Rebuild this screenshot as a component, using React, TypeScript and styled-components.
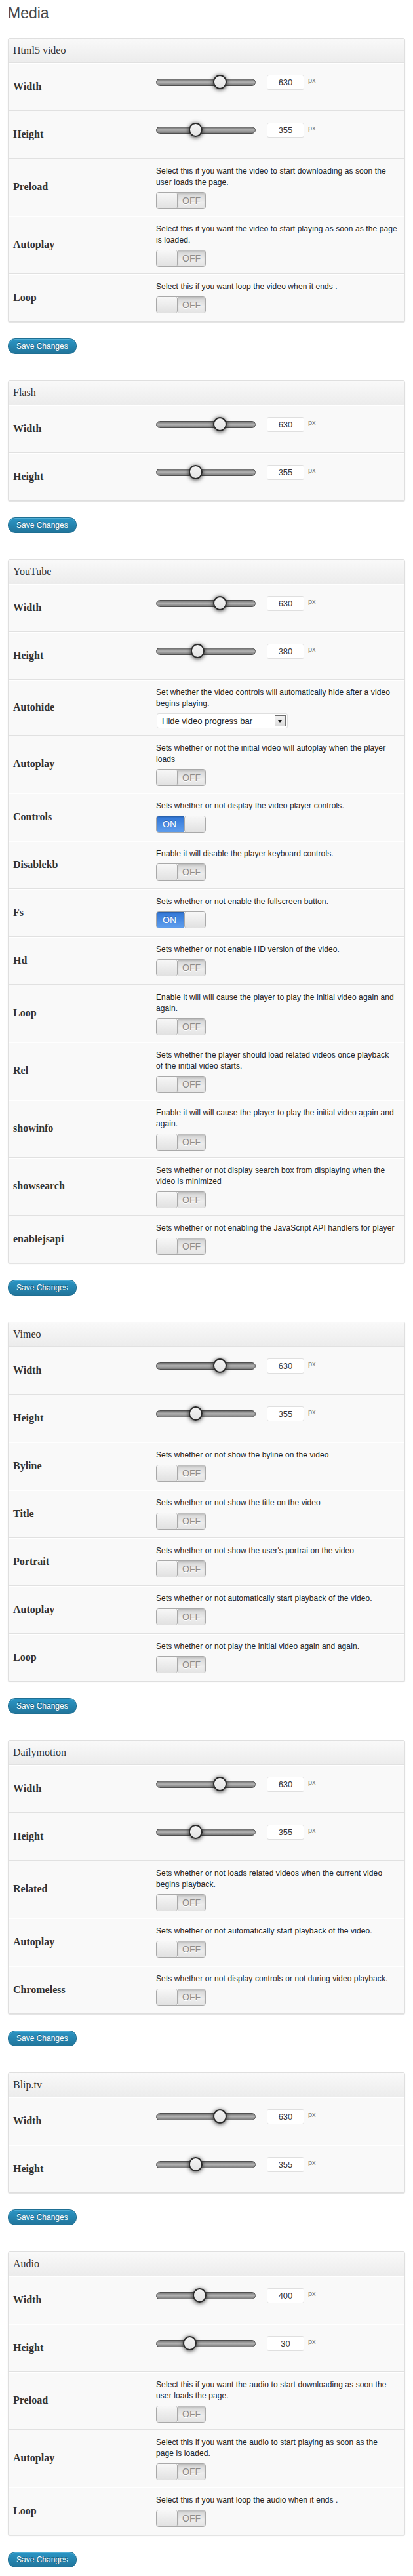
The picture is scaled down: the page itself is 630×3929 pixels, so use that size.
import styled, { createGlobalStyle } from 'styled-components';

const GlobalStyle = createGlobalStyle`
  body {
    margin: 0;
    background: #fff;
    color: #333;
    font-family: "Liberation Sans", Arial, sans-serif;
  }
`;

type Field =
  | { kind: 'range'; label: string; value: number; pos: number }
  | { kind: 'toggle'; label: string; text: string; on?: boolean }
  | { kind: 'select'; label: string; text: string; option: string };

type Section = { title: string; fields: Field[] };

const sections: Section[] = [
  {
    title: 'Html5 video',
    fields: [
      { kind: 'range', label: 'Width', value: 630, pos: 97 },
      { kind: 'range', label: 'Height', value: 355, pos: 60 },
      {
        kind: 'toggle',
        label: 'Preload',
        text: 'Select this if you want the video to start downloading as soon the\nuser loads the page.',
      },
      {
        kind: 'toggle',
        label: 'Autoplay',
        text: 'Select this if you want the video to start playing as soon as the page\nis loaded.',
      },
      { kind: 'toggle', label: 'Loop', text: 'Select this if you want loop the video when it ends .' },
    ],
  },
  {
    title: 'Flash',
    fields: [
      { kind: 'range', label: 'Width', value: 630, pos: 97 },
      { kind: 'range', label: 'Height', value: 355, pos: 60 },
    ],
  },
  {
    title: 'YouTube',
    fields: [
      { kind: 'range', label: 'Width', value: 630, pos: 97 },
      { kind: 'range', label: 'Height', value: 380, pos: 63 },
      {
        kind: 'select',
        label: 'Autohide',
        text: 'Set whether the video controls will automatically hide after a video\nbegins playing.',
        option: 'Hide video progress bar',
      },
      {
        kind: 'toggle',
        label: 'Autoplay',
        text: 'Sets whether or not the initial video will autoplay when the player\nloads',
      },
      { kind: 'toggle', label: 'Controls', text: 'Sets whether or not display the video player controls.', on: true },
      { kind: 'toggle', label: 'Disablekb', text: 'Enable it will disable the player keyboard controls.' },
      { kind: 'toggle', label: 'Fs', text: 'Sets whether or not enable the fullscreen button.', on: true },
      { kind: 'toggle', label: 'Hd', text: 'Sets whether or not enable HD version of the video.' },
      {
        kind: 'toggle',
        label: 'Loop',
        text: 'Enable it will will cause the player to play the initial video again and\nagain.',
      },
      {
        kind: 'toggle',
        label: 'Rel',
        text: 'Sets whether the player should load related videos once playback\nof the initial video starts.',
      },
      {
        kind: 'toggle',
        label: 'showinfo',
        text: 'Enable it will will cause the player to play the initial video again and\nagain.',
      },
      {
        kind: 'toggle',
        label: 'showsearch',
        text: 'Sets whether or not display search box from displaying when the\nvideo is minimized',
      },
      {
        kind: 'toggle',
        label: 'enablejsapi',
        text: 'Sets whether or not enabling the JavaScript API handlers for player',
      },
    ],
  },
  {
    title: 'Vimeo',
    fields: [
      { kind: 'range', label: 'Width', value: 630, pos: 97 },
      { kind: 'range', label: 'Height', value: 355, pos: 60 },
      { kind: 'toggle', label: 'Byline', text: 'Sets whether or not show the byline on the video' },
      { kind: 'toggle', label: 'Title', text: 'Sets whether or not show the title on the video' },
      { kind: 'toggle', label: 'Portrait', text: "Sets whether or not show the user's portrai on the video" },
      { kind: 'toggle', label: 'Autoplay', text: 'Sets whether or not automatically start playback of the video.' },
      { kind: 'toggle', label: 'Loop', text: 'Sets whether or not play the initial video again and again.' },
    ],
  },
  {
    title: 'Dailymotion',
    fields: [
      { kind: 'range', label: 'Width', value: 630, pos: 97 },
      { kind: 'range', label: 'Height', value: 355, pos: 60 },
      {
        kind: 'toggle',
        label: 'Related',
        text: 'Sets whether or not loads related videos when the current video\nbegins playback.',
      },
      { kind: 'toggle', label: 'Autoplay', text: 'Sets whether or not automatically start playback of the video.' },
      {
        kind: 'toggle',
        label: 'Chromeless',
        text: 'Sets whether or not display controls or not during video playback.',
      },
    ],
  },
  {
    title: 'Blip.tv',
    fields: [
      { kind: 'range', label: 'Width', value: 630, pos: 97 },
      { kind: 'range', label: 'Height', value: 355, pos: 60 },
    ],
  },
  {
    title: 'Audio',
    fields: [
      { kind: 'range', label: 'Width', value: 400, pos: 66 },
      { kind: 'range', label: 'Height', value: 30, pos: 51 },
      {
        kind: 'toggle',
        label: 'Preload',
        text: 'Select this if you want the audio to start downloading as soon the\nuser loads the page.',
      },
      {
        kind: 'toggle',
        label: 'Autoplay',
        text: 'Select this if you want the audio to start playing as soon as the\npage is loaded.',
      },
      { kind: 'toggle', label: 'Loop', text: 'Select this if you want loop the audio when it ends .' },
    ],
  },
];

const Page = styled.div`
  padding: 6px 12px 12px;
`;

const Heading = styled.h2`
  margin: 0;
  font: normal 23px/29px "Liberation Sans", Arial, sans-serif;
  color: #464646;
`;

const Group = styled.form`
  margin: 23px 0 0;

  & + & {
    margin-top: 40.5px;
  }
`;

const Panel = styled.div`
  border: 1px solid #dfdfdf;
  border-radius: 3px;
  background: #f9f9f9;
  box-shadow: 0 1px 1px rgba(0, 0, 0, 0.12);
  overflow: hidden;
`;

const PanelHead = styled.h3`
  margin: 0;
  height: 35.5px;
  padding-left: 7px;
  display: flex;
  align-items: center;
  font: normal 16px "Liberation Serif", "Times New Roman", serif;
  color: #333;
  background: linear-gradient(#f9f9f9, #ececec);
`;

const Row = styled.div`
  display: grid;
  grid-template-columns: 225px 1fr;
  min-height: 72px;
  border-top: 1px solid #e1e1e1;
  box-shadow: inset 0 1px 0 #fff;
`;

const Label = styled.div`
  display: flex;
  align-items: center;
  padding-left: 7px;
  font: bold 16px "Liberation Serif", "Times New Roman", serif;
  color: #333;
`;

const Cell = styled.div<{ $range?: boolean }>`
  padding: ${(p) => (p.$range ? '18px 10px 0 0' : '11px 10px 10px 0')};
`;

const Desc = styled.p`
  margin: 0 0 6px;
  font-size: 12px;
  line-height: 17px;
  letter-spacing: 0.1px;
  color: #222;
  white-space: pre-line;
`;

const RangeLine = styled.div`
  display: flex;
  align-items: center;
  height: 23px;
`;

const Track = styled.div`
  position: relative;
  width: 152px;
  height: 11px;
  box-sizing: border-box;
  border: 1px solid #505050;
  border-radius: 6px;
  background: linear-gradient(#6e6e6e, #b4b4b4 45%, #9a9a9a 70%, #7a7a7a);
`;

const Thumb = styled.span`
  position: absolute;
  top: -7px;
  width: 21px;
  height: 22px;
  box-sizing: border-box;
  border: 2px solid #2b2b2b;
  border-radius: 50%;
  background: linear-gradient(#f4f4f4, #e4e4e4);
  box-shadow: 0 1px 6px rgba(0, 0, 0, 0.75);
`;

const NumberBox = styled.input`
  width: 57px;
  height: 23px;
  box-sizing: border-box;
  margin: 0 0 0 17px;
  padding: 0;
  border: 1px solid #dfdfdf;
  border-radius: 3px;
  background: #fff;
  text-align: center;
  font: 13px "Liberation Sans", Arial, sans-serif;
  color: #333;
`;

const Unit = styled.span`
  align-self: flex-start;
  margin: 2px 0 0 6px;
  font-size: 11px;
  color: #777;
`;

const Switch = styled.span<{ $on?: boolean }>`
  display: flex;
  flex-direction: ${(p) => (p.$on ? 'row' : 'row-reverse')};
  width: 76px;
  height: 26px;
  box-sizing: border-box;
  border: 1px solid #a9a9a9;
  border-radius: 4px;
  overflow: hidden;
`;

const SwitchFace = styled.span<{ $on?: boolean }>`
  flex: 1;
  display: flex;
  align-items: center;
  justify-content: ${(p) => (p.$on ? 'flex-start' : 'center')};
  padding-left: ${(p) => (p.$on ? '9px' : '0')};
  font: 14px/1 "Liberation Sans", Arial, sans-serif;
  color: ${(p) => (p.$on ? '#fff' : '#8c8c8c')};
  text-shadow: ${(p) => (p.$on ? '0 -1px 0 rgba(0,0,0,0.2)' : '0 1px 0 #fff')};
  background: ${(p) =>
    p.$on ? 'linear-gradient(#3176d6, #5e9ded)' : 'linear-gradient(#d4d4d4, #ededed 60%, #e4e4e4)'};
  box-shadow: ${(p) => (p.$on ? 'inset 0 1px 2px rgba(0,0,0,0.25)' : 'inset 0 2px 3px rgba(0,0,0,0.12)')};
`;

const SwitchKnob = styled.span<{ $on?: boolean }>`
  width: 31px;
  flex: none;
  border-${(p) => (p.$on ? 'left' : 'right')}: 1px solid #a9a9a9;
  border-radius: 3px;
  background: linear-gradient(#f7f7f7, #e1e1e1);
`;

const Select = styled.div`
  display: flex;
  align-items: center;
  justify-content: space-between;
  width: 200px;
  height: 23px;
  box-sizing: border-box;
  margin-left: 1px;
  padding: 0 2px 0 7px;
  border: 1px solid #dfdfdf;
  border-radius: 3px;
  background: #fff;
  font-size: 13px;
  color: #222;
`;

const SelectArrow = styled.span`
  position: relative;
  width: 17px;
  height: 17px;
  box-sizing: border-box;
  border: 1px solid #6f6f6f;
  background: linear-gradient(#f2f2f2, #dcdcdc);

  &::after {
    content: '';
    position: absolute;
    left: 4px;
    top: 6px;
    border-left: 3px solid transparent;
    border-right: 3px solid transparent;
    border-top: 4px solid #111;
  }
`;

const SaveButton = styled.button`
  display: block;
  height: 24px;
  margin-top: 25px;
  padding: 0 12px;
  border: 1px solid #1f6f93;
  border-radius: 11px;
  background: linear-gradient(#2a95c5, #21759b);
  box-shadow: inset 0 1px 0 rgba(120, 200, 230, 0.5);
  color: #fff;
  font: 12px "Liberation Sans", Arial, sans-serif;
  text-shadow: 0 -1px 0 rgba(0, 0, 0, 0.3);
  cursor: pointer;
`;

function FieldRow({ field }: { field: Field }) {
  if (field.kind === 'range') {
    return (
      <Row>
        <Label>{field.label}</Label>
        <Cell $range>
          <RangeLine>
            <Track>
              <Thumb style={{ left: field.pos - 11 }} />
            </Track>
            <NumberBox defaultValue={field.value} />
            <Unit>px</Unit>
          </RangeLine>
        </Cell>
      </Row>
    );
  }
  if (field.kind === 'select') {
    return (
      <Row>
        <Label>{field.label}</Label>
        <Cell>
          <Desc>{field.text}</Desc>
          <Select>
            {field.option}
            <SelectArrow />
          </Select>
        </Cell>
      </Row>
    );
  }
  return (
    <Row>
      <Label>{field.label}</Label>
      <Cell>
        <Desc>{field.text}</Desc>
        <Switch $on={field.on}>
          <SwitchFace $on={field.on}>{field.on ? 'ON' : 'OFF'}</SwitchFace>
          <SwitchKnob $on={field.on} />
        </Switch>
      </Cell>
    </Row>
  );
}

export default function App() {
  return (
    <>
      <GlobalStyle />
      <Page>
        <Heading>Media</Heading>
        {sections.map((s) => (
          <Group key={s.title} onSubmit={(e) => e.preventDefault()}>
            <Panel>
              <PanelHead>{s.title}</PanelHead>
              {s.fields.map((f, i) => (
                <FieldRow key={i} field={f} />
              ))}
            </Panel>
            <SaveButton type="submit">Save Changes</SaveButton>
          </Group>
        ))}
      </Page>
    </>
  );
}
